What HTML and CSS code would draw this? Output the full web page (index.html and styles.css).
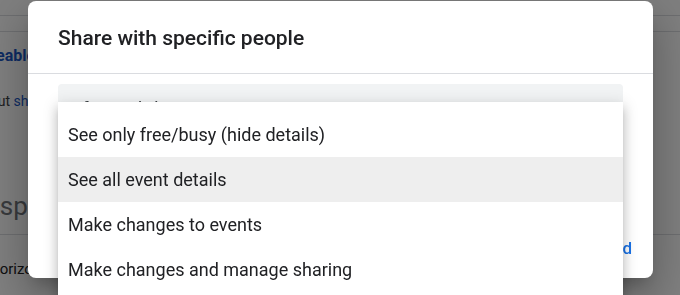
FILE: index.html
```html
<!DOCTYPE html>
<html lang="en">
<head>
<meta charset="utf-8">
<title>Share with specific people</title>
<link rel="stylesheet" href="styles.css">
</head>
<body>
  <div class="bg">
    <div class="bg-rule"></div>
    <div class="bg-rule"></div>
    <div class="bg-link">Shareable link</div>
    <div class="bg-help">Learn more about <span class="bg-a">sharing</span></div>
    <div class="bg-heading">Share with specific people</div>
    <div class="bg-name">Horizon Team</div>
  </div>
  <div class="scrim"></div>
  <div class="dialog" role="dialog">
    <div class="dialog-header">Share with specific people</div>
    <div class="dialog-body">
      <div class="field">info@webdesigner123.com</div>
      <ul class="menu">
        <li class="menu-item">See only free/busy (hide details)</li>
        <li class="menu-item is-active">See all event details</li>
        <li class="menu-item">Make changes to events</li>
        <li class="menu-item">Make changes and manage sharing</li>
      </ul>
    </div>
    <div class="dialog-footer">
      <button class="text-btn">Cancel</button>
      <button class="text-btn">Send</button>
    </div>
  </div>
</body>
</html>
```
FILE: styles.css
```css
* { box-sizing: border-box; }
html, body { margin: 0; height: 100%; }
body {
  font-family: Roboto, "Noto Sans", Arial, sans-serif;
  background: #fff;
  color: #3c4043;
  overflow: hidden;
}

/* page behind the dialog */
.bg { width: 680px; white-space: nowrap; }
.bg-rule { height: 16px; border-bottom: 1px solid #dadce0; }
.bg-link {
  margin: 14px 0 0 -37px;
  font-size: 16px; line-height: 20px; font-weight: 700;
  color: #1a57c4;
}
.bg-help {
  margin: 25px 0 0 -100px;
  font-size: 14px; line-height: 20px;
  color: #3c4043;
}
.bg-a { color: #1a57c4; }
.bg-heading {
  margin: 79px 0 0 -128px;
  padding-bottom: 12px;
  border-bottom: 1px solid #dadce0;
  font-size: 26px; line-height: 32px;
  color: #70757a;
}
.bg-name {
  margin: 24px 0 0 -11px;
  font-size: 15px; line-height: 20px;
  color: #202124;
}

.scrim {
  position: fixed; inset: 0;
  background: rgba(0, 0, 0, 0.5);
}

/* dialog */
.dialog {
  position: absolute;
  top: 1px; left: 28px;
  width: 625px; height: 277px;
  background: #fff;
  border-radius: 8px;
  display: flex; flex-direction: column;
  box-shadow: 0 11px 15px -7px rgba(0,0,0,.2), 0 24px 38px 3px rgba(0,0,0,.14), 0 9px 46px 8px rgba(0,0,0,.12);
}
.dialog-header {
  padding: 23px 30px 21px;
  font-size: 21px; line-height: 28px; font-weight: 500;
  color: #202124;
  border-bottom: 1px solid #dadce0;
  border-radius: 8px 8px 0 0;
}
.dialog-body {
  position: relative;
  padding: 10px 30px 0;
}
.field {
  height: 56px;
  padding: 13px 10px 0;
  background: #f1f3f4;
  border-radius: 4px 4px 0 0;
  font-size: 18px; line-height: 24px;
  color: #3c4043;
}
.menu {
  position: absolute;
  top: 28px; left: 30px;
  width: 565px;
  margin: 0; padding: 10px 0 8px;
  list-style: none;
  background: #fff;
  box-shadow: 0 5px 5px -3px rgba(0,0,0,.2), 0 8px 10px 1px rgba(0,0,0,.14), 0 3px 14px 2px rgba(0,0,0,.12);
  z-index: 2;
}
.menu-item {
  height: 45px;
  padding: 0 10px;
  font-size: 18px; line-height: 45px;
  color: #202124;
}
.menu-item.is-active { background: #eeeeee; }

.dialog-footer {
  margin-top: auto;
  display: flex; justify-content: flex-end; gap: 8px;
  padding: 0 13px 12px;
}
.text-btn {
  border: 0; background: none;
  padding: 0 8px;
  font-family: Roboto, "Noto Sans", Arial, sans-serif;
  font-size: 17px; line-height: 36px; font-weight: 500;
  color: #1a73e8;
}
```
